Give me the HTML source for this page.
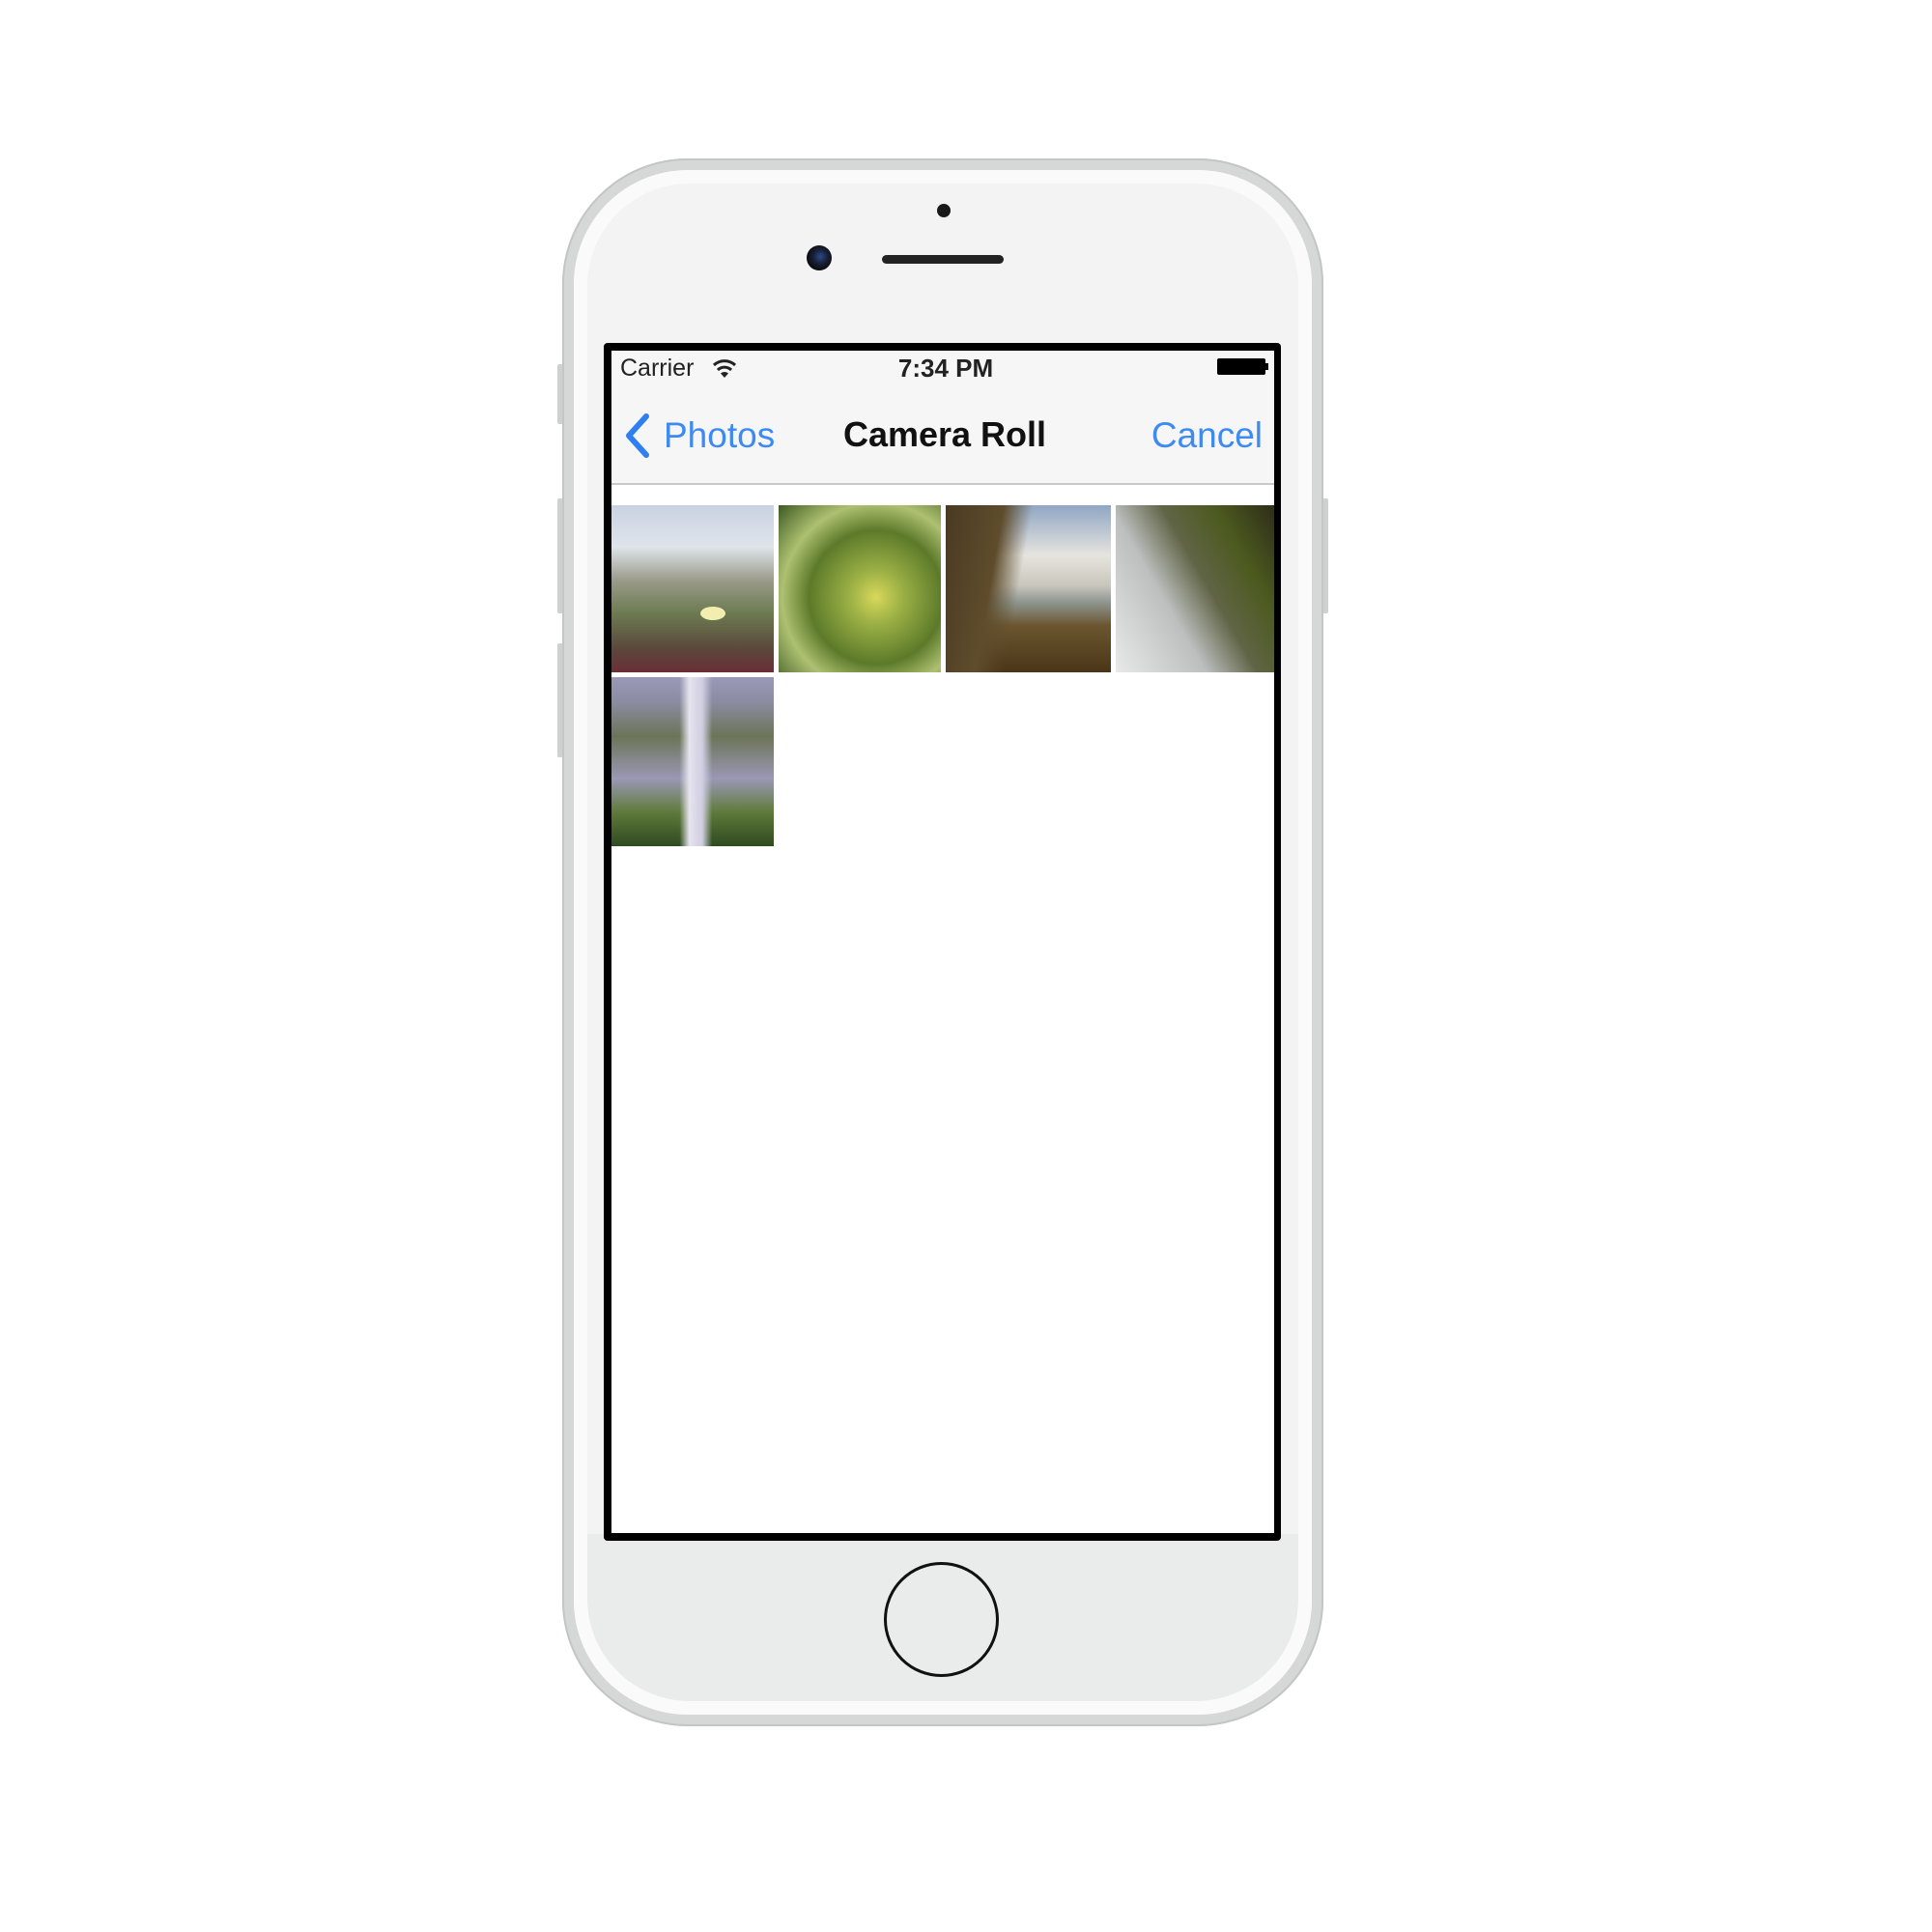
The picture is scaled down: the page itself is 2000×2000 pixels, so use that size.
<!DOCTYPE html>
<html><head><style>
body{margin:0;width:2000px;height:2000px;background:#fff;position:relative;overflow:hidden;font-family:"Liberation Sans",sans-serif}
.a{position:absolute}
.phone{left:582px;top:164px;width:788px;height:1623px;border-radius:130px;background:#d6d7d7;box-shadow:inset 0 0 0 2px #c4c5c5}
.face{left:594px;top:176px;width:764px;height:1599px;border-radius:118px;background:#fafafa}
.face2{left:608px;top:190px;width:736px;height:1571px;border-radius:106px;background:linear-gradient(#f3f3f3 0%,#f3f3f3 89%,#eaebeb 89%,#eaebeb 100%)}
.btn{background:#cfd0d0;width:6px;border-radius:2px}
.scr{left:625px;top:355px;width:701px;height:1240px;background:#000;border-radius:4px}
.in{left:633px;top:363px;width:686px;height:1224px;background:#fff;overflow:hidden}
.bar{left:0;top:0;width:686px;height:137px;background:#f6f6f7;border-bottom:2px solid #c8c8c8}
.ph{position:absolute}
</style></head><body>
<div class="a btn" style="left:577px;top:377px;height:62px"></div>
<div class="a btn" style="left:577px;top:516px;height:119px"></div>
<div class="a btn" style="left:577px;top:666px;height:118px"></div>
<div class="a btn" style="left:1369px;top:516px;height:119px"></div>
<div class="a phone"></div>
<div class="a face"></div>
<div class="a face2"></div>
<div class="a" style="left:970px;top:211px;width:14px;height:14px;border-radius:50%;background:#1a1a1a"></div>
<div class="a" style="left:835px;top:254px;width:26px;height:26px;border-radius:50%;background:radial-gradient(circle at 55% 45%,#2a4a90 0,#1a2238 35%,#0c0c10 70%)"></div>
<div class="a" style="left:913px;top:264px;width:126px;height:9px;border-radius:5px;background:#222"></div>
<div class="a" style="left:915px;top:1617px;width:113px;height:113px;border-radius:50%;border:3px solid #111;background:#eaebeb"></div>
<div class="a scr"></div>
<div class="a in">
 <div class="a bar">
  <div class="a" style="left:9px;top:4px;font-size:25px;color:#222">Carrier</div>
  <svg class="a" style="left:104px;top:8px" width="26" height="22" viewBox="0 0 26 22"><path d="M2 7 A16 16 0 0 1 24 7" stroke="#222" stroke-width="3" fill="none"/><path d="M6 12 A10 10 0 0 1 20 12" stroke="#222" stroke-width="3" fill="none"/><path d="M13 20 L9 15.5 A6 6 0 0 1 17 15.5 Z" fill="#222"/></svg>
  <div class="a" style="left:3px;width:686px;text-align:center;top:3px;font-size:26px;font-weight:bold;color:#222">7:34 PM</div>
  <div class="a" style="left:627px;top:8px;width:50px;height:17px;background:#000;border-radius:2px"></div>
  <div class="a" style="left:677px;top:13px;width:3px;height:7px;background:#000"></div>
  <svg class="a" style="left:12px;top:64px" width="30" height="50" viewBox="0 0 30 50"><path d="M24 4 L6 24 L24 44" stroke="#2f7ff0" stroke-width="6" fill="none" stroke-linecap="round" stroke-linejoin="round"/></svg>
  <div class="a" style="left:54px;top:67px;font-size:37px;color:#3d8af2">Photos</div>
  <div class="a" style="left:2px;width:686px;text-align:center;top:66px;font-size:36px;font-weight:bold;color:#111">Camera Roll</div>
  <div class="a" style="right:12px;top:67px;font-size:37px;color:#3d8af2">Cancel</div>
 </div>
 <div class="ph" style="left:0;top:160px;width:168px;height:173px;background:linear-gradient(#c9d2e2 0%,#dfe4ea 25%,#9a9b8a 45%,#6c7a50 65%,#5b4a3c 85%,#6a2e36 100%)"><div class="ph" style="left:92px;top:105px;width:26px;height:14px;border-radius:50%;background:#f1eeb0"></div></div>
 <div class="ph" style="left:173px;top:160px;width:168px;height:173px;background:radial-gradient(circle at 60% 55%,#d8d85a 0,#9bb045 20%,#5c7a2a 50%,#aec071 70%,#3d5a22 100%)"></div>
 <div class="ph" style="left:346px;top:160px;width:171px;height:173px;background:linear-gradient(100deg,#4a3a22 0%,#5e4c2c 30%,transparent 45%),linear-gradient(#8fa6c4 0%,#e6e4de 30%,#c9c6bd 48%,#8e9690 58%,#6b5630 72%,#4a3518 100%)"></div>
 <div class="ph" style="left:522px;top:160px;width:168px;height:173px;background:linear-gradient(60deg,#e8eaea 0%,#bdbfbf 35%,#606445 55%,#4c5a1f 75%,#2c2a18 100%)"></div>
 <div class="ph" style="left:0;top:338px;width:168px;height:175px;background:linear-gradient(90deg,transparent 0,transparent 42%,#e6e4ee 48%,#cfcde0 56%,transparent 62%),linear-gradient(#9a98b8 0%,#8a8ca0 15%,#6c7458 35%,#9a98b4 60%,#5e7a3a 80%,#2f4a20 100%)"></div>
</div>
</body></html>
